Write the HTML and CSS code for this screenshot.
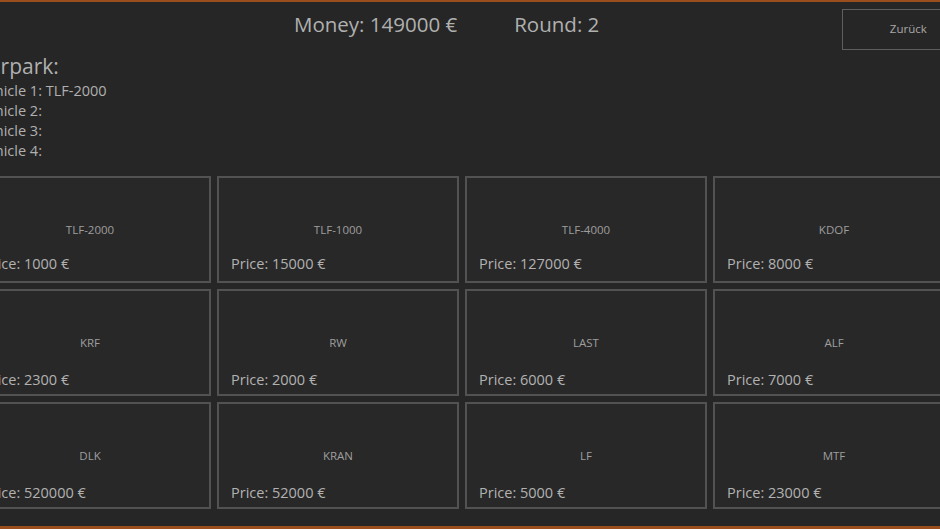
FILE: index.html
```html
<!DOCTYPE html>
<html lang="en">
<head>
<meta charset="utf-8">
<title>Shop</title>
<link rel="stylesheet" href="styles.css">
</head>
<body>
<div class="frame">
  <div class="page">
    <header class="header">
      <div class="stats">
        <span class="stat">Money: 149000 €</span>
        <span class="stat round">Round: 2</span>
      </div>
      <button class="back">Zurück</button>
    </header>
    <section class="fleet">
      <div class="fleet-title">Fuhrpark:</div>
      <div class="fleet-line">Vehicle 1: TLF-2000</div>
      <div class="fleet-line">Vehicle 2:</div>
      <div class="fleet-line">Vehicle 3:</div>
      <div class="fleet-line">Vehicle 4:</div>
    </section>
    <section class="grid">
      <div class="card top"><div class="name">TLF-2000</div><div class="price">Price: 1000 €</div></div>
      <div class="card top"><div class="name">TLF-1000</div><div class="price">Price: 15000 €</div></div>
      <div class="card top"><div class="name">TLF-4000</div><div class="price">Price: 127000 €</div></div>
      <div class="card top"><div class="name">KDOF</div><div class="price">Price: 8000 €</div></div>
      <div class="card"><div class="name">KRF</div><div class="price">Price: 2300 €</div></div>
      <div class="card"><div class="name">RW</div><div class="price">Price: 2000 €</div></div>
      <div class="card"><div class="name">LAST</div><div class="price">Price: 6000 €</div></div>
      <div class="card"><div class="name">ALF</div><div class="price">Price: 7000 €</div></div>
      <div class="card"><div class="name">DLK</div><div class="price">Price: 520000 €</div></div>
      <div class="card"><div class="name">KRAN</div><div class="price">Price: 52000 €</div></div>
      <div class="card"><div class="name">LF</div><div class="price">Price: 5000 €</div></div>
      <div class="card"><div class="name">MTF</div><div class="price">Price: 23000 €</div></div>
    </section>
  </div>
</div>
</body>
</html>
```
FILE: styles.css
```css
html, body {
  margin: 0;
  padding: 0;
  background: #262626;
  overflow: hidden;
}
body {
  font-family: "Open Sans", "Noto Sans", sans-serif;
  color: #b2b2b2;
}
.frame {
  width: 940px;
  height: 529px;
  box-sizing: border-box;
  border-top: 2px solid #9a4d1d;
  border-bottom: 3px solid #9a4d1d;
  overflow: hidden;
  background: #262626;
}
.page {
  margin-left: -31px;
  width: 1020px;
}
.header {
  display: flex;
  align-items: flex-start;
  height: 50px;
}
.stats {
  display: flex;
  margin-left: 325px;
  margin-top: 7px;
}
.stat {
  font-size: 20.5px;
  line-height: 30px;
  color: #b0b0b0;
}
.round {
  margin-left: 57px;
}
.back {
  margin-left: 243px;
  margin-top: 7px;
  width: 130px;
  height: 41px;
  background: transparent;
  border: 1px solid #5e5e5e;
  color: #a8a8a8;
  font-family: "Open Sans", "Noto Sans", sans-serif;
  font-size: 11.5px;
  padding: 0 0 3px 2px;
}
.fleet {
  padding-left: 9px;
}
.fleet-title {
  margin-left: -14px;
  font-size: 21px;
  line-height: 28px;
  color: #b0b0b0;
}
.fleet-line {
  font-size: 14.5px;
  line-height: 20px;
  color: #b0b0b0;
}
.fleet-title + .fleet-line {
  margin-top: 1px;
}
.grid {
  margin-top: 15px;
  display: grid;
  grid-template-columns: repeat(4, 242px);
  grid-auto-rows: 107px;
  column-gap: 6px;
  row-gap: 6px;
}
.card {
  box-sizing: border-box;
  border: 2px solid #525252;
  background: #282828;
  display: flex;
  flex-direction: column;
  padding: 44px 12px 0;
}
.name {
  text-align: center;
  font-size: 11.5px;
  line-height: 16px;
  color: #9e9e9e;
}
.price {
  margin-top: 19px;
  font-size: 14.5px;
  line-height: 20px;
  color: #b2b2b2;
}
.card.top .price {
  margin-top: 16px;
}
```
